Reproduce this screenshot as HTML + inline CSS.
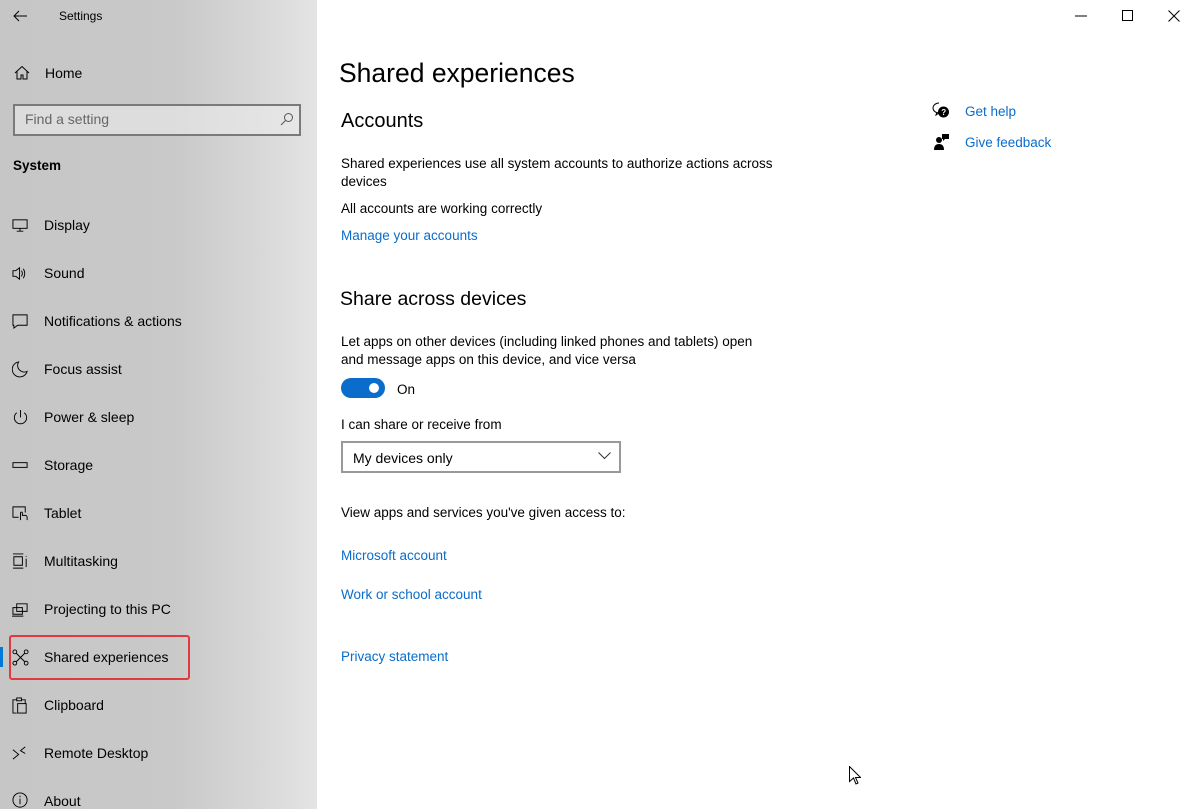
<!DOCTYPE html>
<html><head><meta charset="utf-8"><style>
*{margin:0;padding:0;box-sizing:border-box}
body{width:1188px;height:809px;overflow:hidden;font-family:"Liberation Sans",sans-serif;font-size:13.5px;color:#000;background:#fff;position:relative}
.side{position:absolute;left:0;top:0;width:317px;height:809px;background:linear-gradient(90deg,#c6c6c6 0%,#c9c9c9 55%,#d8d8d8 82%,#e4e4e4 100%)}
.a{position:absolute;white-space:nowrap}
.nav{position:absolute;left:44px;font-size:14px;color:#000}
.ic{position:absolute;left:12px;width:17px;height:17px}
.link{color:#0a6ccb}
svg{display:block}
</style></head><body>
<div class="side">
  <svg class="a" style="left:12px;top:8px" width="16" height="16" viewBox="0 0 16 16"><path d="M15 8H2M7 3L2 8l5 5" stroke="#000" fill="none" stroke-width="1"/></svg>
  <div class="a" style="left:59px;top:9px;font-size:12px">Settings</div>
  <svg class="a" style="left:14px;top:65px" width="16" height="16" viewBox="0 0 16 16"><path d="M1 8L8 1.5 15 8M3 6.5V14h4v-4h2v4h4V6.5" stroke="#000" fill="none"/></svg>
  <div class="nav" style="left:45px;top:65px">Home</div>
  <div class="a" style="left:13px;top:104px;width:288px;height:32px;border:2px solid #7a7a7a;background:rgba(235,235,235,.6)"></div>
  <div class="a" style="left:25px;top:111px;font-size:14px;color:#666">Find a setting</div>
  <svg class="a" style="left:280px;top:112px" width="14" height="14" viewBox="0 0 14 14"><circle cx="8.5" cy="5.5" r="4" stroke="#555" fill="none"/><path d="M5.5 8.5L1 13" stroke="#555"/></svg>
  <div class="a" style="left:13px;top:158px;font-size:13.5px;font-weight:bold">System</div>

  <svg class="ic" style="top:217px" viewBox="0 0 18 18"><rect x="1" y="3" width="15" height="9" stroke="#000" fill="none"/><path d="M8.5 12v3M5 15h7" stroke="#000"/></svg>
  <div class="nav" style="top:217px">Display</div>
  <svg class="ic" style="top:265px" viewBox="0 0 18 18"><path d="M1 6h3l4-3v12l-4-3H1z" stroke="#000" fill="none"/><path d="M10 6q2 3 0 6M12 4q3 5 0 10" stroke="#000" fill="none"/></svg>
  <div class="nav" style="top:265px">Sound</div>
  <svg class="ic" style="top:313px" viewBox="0 0 18 18"><path d="M1 2h15v11H6l-4 3v-3H1z" stroke="#000" fill="none"/></svg>
  <div class="nav" style="top:313px">Notifications &amp; actions</div>
  <svg class="ic" style="top:361px" viewBox="0 0 18 18"><path d="M7 1A8 8 0 1 0 16 11 7 7 0 0 1 7 1z" stroke="#000" fill="none"/></svg>
  <div class="nav" style="top:361px">Focus assist</div>
  <svg class="ic" style="top:409px" viewBox="0 0 18 18"><path d="M5 4a6.5 6.5 0 1 0 8 0M9 1v8" stroke="#000" fill="none"/></svg>
  <div class="nav" style="top:409px">Power &amp; sleep</div>
  <svg class="ic" style="top:457px" viewBox="0 0 18 18"><rect x="1" y="6" width="15" height="5" stroke="#000" fill="none"/></svg>
  <div class="nav" style="top:457px">Storage</div>
  <svg class="ic" style="top:505px" viewBox="0 0 18 18"><path d="M7 13H1V2h13v6" stroke="#000" fill="none"/><path d="M9 16V8.5a1 1 0 0 1 2 0V11h3a2 2 0 0 1 2 2v3" stroke="#000" fill="none"/></svg>
  <div class="nav" style="top:505px">Tablet</div>
  <svg class="ic" style="top:553px" viewBox="0 0 18 18"><path d="M1 1h11M1 16h11M2 4h9v9H2zM15 3v1M15 6v9" stroke="#000" fill="none"/></svg>
  <div class="nav" style="top:553px">Multitasking</div>
  <svg class="ic" style="top:601px" viewBox="0 0 18 18"><path d="M5 3h11v8H5zM1 7h10v7H1zM0 16h12" stroke="#000" fill="none"/></svg>
  <div class="nav" style="top:601px">Projecting to this PC</div>
  <div class="a" style="left:0;top:647px;width:3px;height:20px;background:#0078d7"></div>
  <div class="a" style="left:9px;top:635px;width:181px;height:45px;border:2px solid #e03a3e;border-radius:3px"></div>
  <svg class="ic" style="top:649px" viewBox="0 0 18 18"><circle cx="3" cy="3" r="2" stroke="#000" fill="none"/><circle cx="15" cy="3" r="2" stroke="#000" fill="none"/><circle cx="3" cy="15" r="2" stroke="#000" fill="none"/><circle cx="15" cy="15" r="2" stroke="#000" fill="none"/><path d="M4.5 4.5l9 9M13.5 4.5l-9 9" stroke="#000"/></svg>
  <div class="nav" style="top:649px">Shared experiences</div>
  <svg class="ic" style="top:697px" viewBox="0 0 18 18"><path d="M5 3H1v14h4M10 3h4v4" stroke="#000" fill="none"/><rect x="5" y="1" width="5" height="3" stroke="#000" fill="none"/><rect x="6" y="7" width="9" height="10" stroke="#000" fill="none"/></svg>
  <div class="nav" style="top:697px">Clipboard</div>
  <svg class="ic" style="top:745px" viewBox="0 0 18 18"><path d="M1 5l6 5-6 5M14 2l-5 4 5 3" stroke="#000" fill="none"/></svg>
  <div class="nav" style="top:745px">Remote Desktop</div>
  <svg class="ic" style="top:792px" viewBox="0 0 18 18"><circle cx="8.5" cy="8.5" r="7.5" stroke="#000" fill="none"/><path d="M8.5 7v6M8.5 4v1.5" stroke="#000"/></svg>
  <div class="nav" style="top:793px">About</div>
</div>

<svg class="a" style="left:1075px;top:15px" width="12" height="2"><path d="M0 1h12" stroke="#000"/></svg>
<svg class="a" style="left:1122px;top:10px" width="12" height="12"><rect x=".5" y=".5" width="10" height="10" stroke="#000" fill="none"/></svg>
<svg class="a" style="left:1168px;top:10px" width="12" height="12"><path d="M.5 .5l11 11M11.5 .5l-11 11" stroke="#000"/></svg>

<div class="a" style="left:339px;top:58px;font-size:26.5px">Shared experiences</div>
<div class="a" style="left:341px;top:110px;font-size:20px">Accounts</div>
<div class="a" style="left:341px;top:155px;line-height:18px">Shared experiences use all system accounts to authorize actions across<br>devices</div>
<div class="a" style="left:341px;top:201px">All accounts are working correctly</div>
<div class="a link" style="left:341px;top:228px">Manage your accounts</div>
<div class="a" style="left:340px;top:288px;font-size:19.5px">Share across devices</div>
<div class="a" style="left:341px;top:333px;line-height:18px">Let apps on other devices (including linked phones and tablets) open<br>and message apps on this device, and vice versa</div>
<div class="a" style="left:341px;top:378px;width:44px;height:20px;border-radius:10px;background:#0a6ccb"></div>
<div class="a" style="left:369px;top:383px;width:10px;height:10px;border-radius:5px;background:#fff"></div>
<div class="a" style="left:397px;top:382px">On</div>
<div class="a" style="left:341px;top:417px">I can share or receive from</div>
<div class="a" style="left:341px;top:441px;width:280px;height:32px;border:2px solid #999"></div>
<div class="a" style="left:353px;top:450px;font-size:14px">My devices only</div>
<svg class="a" style="left:598px;top:452px" width="13" height="8"><path d="M.5 .5l6 6 6-6" stroke="#333" fill="none"/></svg>
<div class="a" style="left:341px;top:505px">View apps and services you've given access to:</div>
<div class="a link" style="left:341px;top:548px">Microsoft account</div>
<div class="a link" style="left:341px;top:587px">Work or school account</div>
<div class="a link" style="left:341px;top:649px">Privacy statement</div>

<svg class="a" style="left:932px;top:102px" width="18" height="18" viewBox="0 0 18 18"><path d="M7 1a6 5 0 1 0 0 10l-3 2 1-3" stroke="#000" fill="none"/><circle cx="11.5" cy="10" r="5.5" fill="#000"/><text x="9.3" y="13" font-size="8" fill="#fff" font-family="Liberation Sans" font-weight="bold">?</text></svg>
<div class="a link" style="left:965px;top:104px">Get help</div>
<svg class="a" style="left:934px;top:133px" width="16" height="18" viewBox="0 0 16 18"><circle cx="5" cy="7" r="3" fill="#000"/><path d="M0 17q0-6 5-6t5 6z" fill="#000"/><path d="M8 1h7v5h-4l-2 2v-2H8z" fill="#000"/></svg>
<div class="a link" style="left:965px;top:135px">Give feedback</div>

<svg class="a" style="left:849px;top:766px" width="12" height="19" viewBox="0 0 12 19"><path d="M.5 .5v15l4-3.5 2.5 6 2-1-2.5-5.5h5z" fill="#fff" stroke="#000"/></svg>
</body></html>
